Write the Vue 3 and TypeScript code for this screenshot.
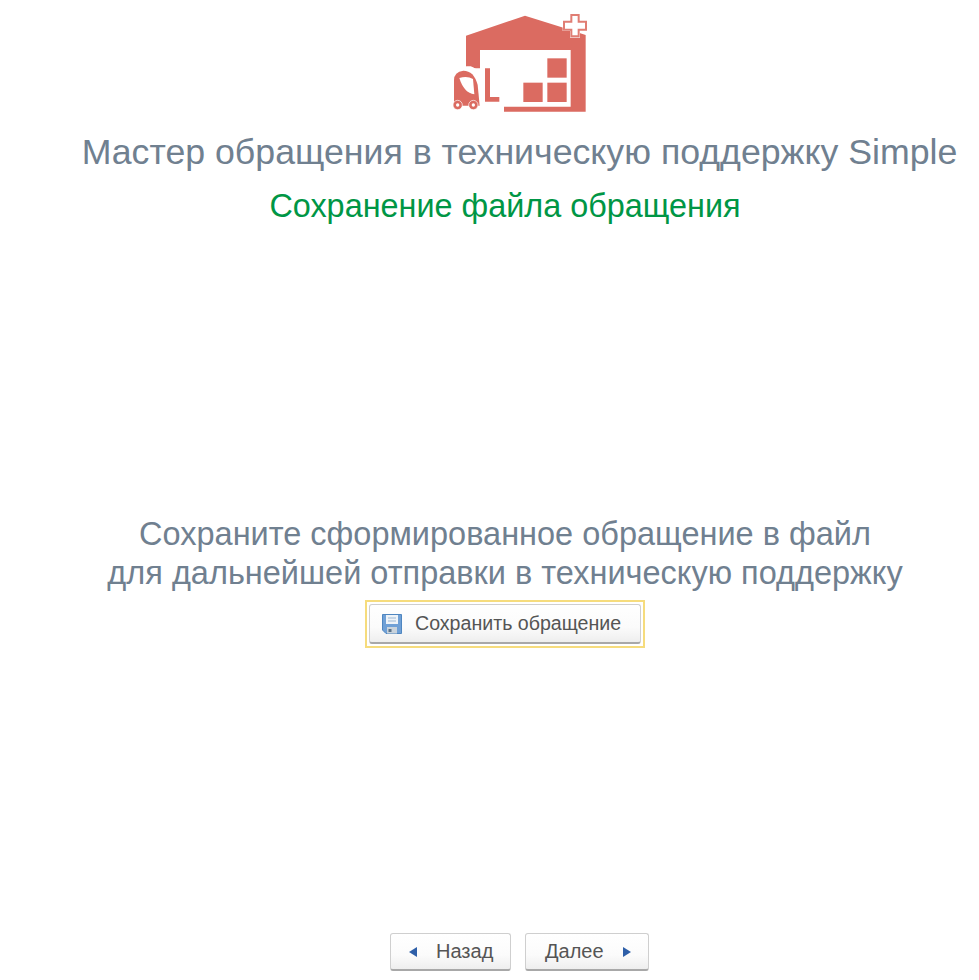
<script setup lang="ts">
const lines: string[] = [
  'Сохраните сформированное обращение в файл',
  'для дальнейшей отправки в техническую поддержку',
]
</script>

<template>
  <main class="page">
    <header class="head">
      <svg class="logo" viewBox="0 0 480 345" width="160" height="115" aria-hidden="true">
        <path fill="#db6b61" d="M78 92 L255 32 L375 70 L437 90 L437 320 L192 320 L192 305 L392 305 L392 135 L120 135 L120 190 L78 190 Z" />
        <path fill="#fff" stroke="#fff" stroke-width="8" d="M394 30 H416 V50 H438 V74 H416 V94 H394 V74 H372 V50 H394 Z" />
        <path fill="#fff" stroke="#e07d73" stroke-width="6" d="M394 30 H416 V50 H438 V74 H416 V94 H394 V74 H372 V50 H394 Z" />
        <rect x="322" y="160" width="58" height="58" fill="#db6b61" />
        <rect x="250" y="233" width="58" height="58" fill="#db6b61" />
        <rect x="322" y="233" width="58" height="58" fill="#db6b61" />
        <path fill="#db6b61" d="M135 190 H150 V276 H178 V290 H135 Z" />
        <path fill="#fff" d="M30 205 Q50 180 92 184 Q122 192 130 240 V320 H30 Z" />
        <path fill="#db6b61" d="M42 226 Q42 200 70 197 Q102 197 113 240 L119 302 H42 Z" />
        <path fill="#fff" d="M58 219 Q82 212 99 222 L103 268 Q72 264 58 219 Z" />
        <circle cx="53" cy="300" r="14" fill="#db6b61" stroke="#fff" stroke-width="2" />
        <circle cx="100" cy="300" r="14" fill="#db6b61" stroke="#fff" stroke-width="2" />
        <circle cx="53" cy="300" r="5" fill="#fff" />
        <circle cx="100" cy="300" r="5" fill="#fff" />
      </svg>
      <h1 class="title">Мастер обращения в техническую поддержку Simple</h1>
    </header>

    <h2 class="subtitle">Сохранение файла обращения</h2>

    <section class="center">
      <p v-for="line in lines" :key="line" class="message">{{ line }}</p>
      <div class="focus">
        <button class="btn save" type="button">
          <svg class="floppy" viewBox="0 0 22 22" width="22" height="22" aria-hidden="true">
            <path fill="#6fa0d6" stroke="#4f86c0" d="M1.5 1.5 H20.5 V20.5 H5 L1.5 17 Z" />
            <rect x="5" y="2" width="12" height="9" fill="#eef3f8" />
            <path stroke="#9db8d3" d="M7 5 H15 M7 8 H15" />
            <rect x="6" y="14" width="10" height="6.5" fill="#c9d3dc" />
            <rect x="7.5" y="16" width="3" height="3" fill="#5b7388" />
          </svg>
          <span>Сохранить обращение</span>
        </button>
      </div>
    </section>

    <nav class="nav">
      <button class="btn step back" type="button">
        <i class="arrow left"></i>
        <span>Назад</span>
      </button>
      <button class="btn step next" type="button">
        <span>Далее</span>
        <i class="arrow right"></i>
      </button>
    </nav>
  </main>
</template>

<style scoped>
.page {
  width: 979px;
  height: 980px;
  display: flex;
  flex-direction: column;
  background: #fff;
  font-family: "Liberation Sans", Arial, sans-serif;
  overflow: hidden;
}
.head {
  display: flex;
  flex-direction: column;
  align-items: center;
  padding: 5px 0 0 60px;
}
.logo {
  display: block;
}
.title {
  margin: 10px 0 0;
  font-size: 35.7px;
  line-height: 44px;
  font-weight: 400;
  color: #708090;
  white-space: nowrap;
}
.subtitle {
  margin: 10px 0 0;
  padding-left: 31px;
  text-align: center;
  font-size: 32.4px;
  line-height: 44px;
  font-weight: 400;
  color: #009645;
}
.center {
  display: flex;
  flex-direction: column;
  align-items: center;
  padding-left: 31px;
  margin-top: 287px;
}
.message {
  margin: 0;
  font-size: 32.5px;
  line-height: 39px;
  color: #708090;
  white-space: nowrap;
}
.focus {
  margin-top: 7px;
  padding: 2px;
  border: 2px solid #f6dc7d;
}
.btn {
  display: flex;
  align-items: center;
  box-sizing: border-box;
  padding: 0;
  border: 1px solid #cfcfcf;
  border-bottom: 2px solid #a8a8a8;
  border-radius: 3px;
  background: linear-gradient(#ffffff 0%, #fbfbfb 60%, #eeeeee 100%);
  font-family: inherit;
  color: #555;
}
.save {
  width: 272px;
  height: 40px;
  font-size: 19.6px;
  padding-left: 11px;
  gap: 12px;
}
.floppy {
  flex: none;
}
.nav {
  display: flex;
  gap: 14px;
  margin-top: auto;
  margin-bottom: 9px;
  padding-left: 60px;
  justify-content: center;
}
.step {
  height: 38px;
  font-size: 20px;
}
.back {
  width: 121px;
  padding-left: 18px;
  gap: 19px;
}
.next {
  width: 124px;
  padding-left: 19px;
  gap: 19px;
}
.arrow {
  width: 0;
  height: 0;
  border-top: 5px solid transparent;
  border-bottom: 5px solid transparent;
}
.arrow.left {
  border-right: 8px solid #2e5fa8;
}
.arrow.right {
  border-left: 8px solid #2e5fa8;
}
</style>
